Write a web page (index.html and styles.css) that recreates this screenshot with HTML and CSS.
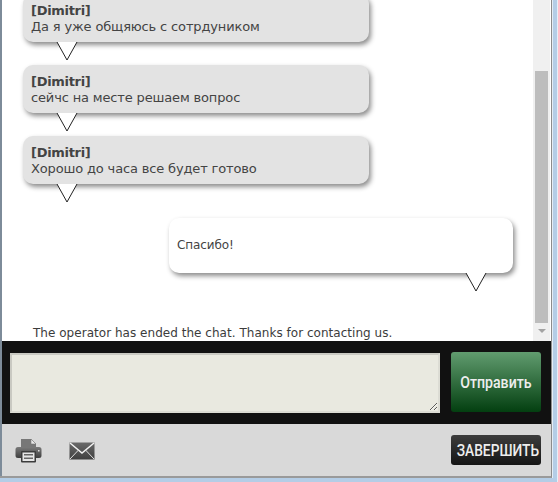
FILE: index.html
```html
<!DOCTYPE html>
<html>
    <head>
        <title>Chat</title>
        <link rel="stylesheet" href="styles.css">
    </head>
    <body>
        <div class="window">
            <div class="chat-area">
                <div class="messages">
                    <div class="bubble bubble-agent">
                        <b>[Dimitri]</b><br>Да я уже общяюсь с сотрдуником
                        <svg class="tail" width="22" height="19" viewBox="0 0 22 19"><polygon points="1,0 11,18 21,0" fill="#fff"/><polyline points="1,0 11,18 21,0" fill="none" stroke="#222" stroke-width="1"/></svg>
                    </div>
                    <div class="bubble bubble-agent">
                        <b>[Dimitri]</b><br>сейчс на месте решаем вопрос
                        <svg class="tail" width="22" height="19" viewBox="0 0 22 19"><polygon points="1,0 11,18 21,0" fill="#fff"/><polyline points="1,0 11,18 21,0" fill="none" stroke="#222" stroke-width="1"/></svg>
                    </div>
                    <div class="bubble bubble-agent">
                        <b>[Dimitri]</b><br>Хорошо до часа все будет готово
                        <svg class="tail" width="22" height="19" viewBox="0 0 22 19"><polygon points="1,0 11,18 21,0" fill="#fff"/><polyline points="1,0 11,18 21,0" fill="none" stroke="#222" stroke-width="1"/></svg>
                    </div>
                    <div class="bubble bubble-user">
                        Спасибо!
                        <svg class="tail" width="22" height="19" viewBox="0 0 22 19"><polygon points="1,0 11,18 21,0" fill="#fff"/><polyline points="1,0 11,18 21,0" fill="none" stroke="#222" stroke-width="1"/></svg>
                    </div>
                    <p class="status">The operator has ended the chat. Thanks for contacting us.</p>
                </div>
                <div class="scrollbar">
                    <div class="scroll-thumb"></div>
                    <div class="scroll-arrow"></div>
                </div>
            </div>
            <div class="input-bar">
                <textarea class="message-input"></textarea>
                <button class="send-button"><span>Отправить</span></button>
            </div>
            <div class="footer">
                <div class="footer-icons">
                    <svg class="icon-print" width="27" height="25" viewBox="0 0 27 25">
                        <defs>
                            <linearGradient id="print-body" x1="0" y1="0" x2="0" y2="1">
                                <stop offset="0" stop-color="#7a7a7a"/>
                                <stop offset="1" stop-color="#3f3f3f"/>
                            </linearGradient>
                        </defs>
                        <path d="M6 1h10l5 5v5H6z" fill="#777"/>
                        <path d="M16 1v5h5z" fill="#e8e8e8" stroke="#777" stroke-width="0.6"/>
                        <path d="M3 9h21a2.500 2.500 0 0 1 2.500 2.500v6a2.500 2.500 0 0 1-2.500 2.500H3a2.500 2.500 0 0 1-2.500-2.500v-6A2.500 2.500 0 0 1 3 9z" fill="url(#print-body)"/>
                        <rect x="6" y="13" width="15" height="11.500" rx="1" fill="#3c3c3c"/>
                        <rect x="7.500" y="14.500" width="12" height="8.500" fill="#e6e6e6"/>
                        <rect x="9" y="16" width="9" height="1.500" fill="#666"/>
                        <rect x="9" y="19.500" width="9" height="1.500" fill="#666"/>
                        <rect x="23" y="12" width="1.500" height="1.500" fill="#ddd"/>
                    </svg>
                    <svg class="icon-mail" width="26" height="18" viewBox="0 0 26 18">
                        <defs>
                            <linearGradient id="mail-body" x1="0" y1="0" x2="0" y2="1">
                                <stop offset="0" stop-color="#6a6a6a"/>
                                <stop offset="1" stop-color="#3f3f3f"/>
                            </linearGradient>
                        </defs>
                        <rect x="0.500" y="0.500" width="25" height="17" fill="url(#mail-body)"/>
                        <path d="M1 1l12 10L25 1" fill="none" stroke="#f2f2f2" stroke-width="1.500"/>
                        <path d="M1 17l8.500-9M25 17l-8.500-9" fill="none" stroke="#ddd" stroke-width="1"/>
                    </svg>
                </div>
                <button class="end-button"><span>ЗАВЕРШИТЬ</span></button>
            </div>
        </div>
    </body>
</html>
```

FILE: styles.css
```css
html, body {
    margin:0;
    padding:0;
    height:482px;
    overflow:hidden;
}

body {
    background:linear-gradient(to right, #b4cde6 557px, #e6eef7 557px);
    font-family:"DejaVu Sans", sans-serif;
    font-size:13px;
    color:#444;
}

.window {
    width:549px;
    height:476px;
    padding-left:2px;
    border-right:1px solid #8c8c8c;
    border-bottom:2px solid #9a9a9a;
    background:linear-gradient(#7d8b99, #7d8b99) no-repeat left top / 2px 100%;
    box-shadow:1px 0 0 #e4edf6;
    display:flex;
    flex-direction:column;
}

.chat-area {
    height:341px;
    background-color:#fff;
    display:flex;
    overflow:hidden;
    flex:none;
}

.messages {
    flex:1;
    padding:0 0 0 21px;
    margin-top:-6px;
}

.bubble {
    position:relative;
    width:330px;
    padding:9px 8px 7px 8px;
    border-radius:10px;
    line-height:16px;
    letter-spacing:-0.15px;
    box-shadow:2px 3px 5px rgba(0,0,0,0.45);
}

.bubble b {
    letter-spacing:-0.3px;
}

.bubble-agent {
    height:32px;
    background-color:#e3e3e3;
    margin-bottom:23px;
}

.bubble-agent .tail {
    position:absolute;
    left:33px;
    top:48px;
}

.bubble-user {
    width:328px;
    height:55px;
    padding:0 8px;
    margin:34px 0 0 146px;
    background-color:#fff;
    font-size:12px;
    letter-spacing:-0.1px;
    line-height:55px;
}

.bubble-user .tail {
    position:absolute;
    left:296px;
    top:55px;
}

.status {
    margin:52px 0 0 10px;
    font-size:12px;
    letter-spacing:0.03px;
    line-height:16px;
    color:#3c3c3c;
}

.scrollbar {
    width:17px;
    margin-right:1px;
    flex:none;
    background-color:#f0f0f0;
    display:flex;
    flex-direction:column;
    align-items:center;
}

.scroll-thumb {
    width:13px;
    height:252px;
    margin-top:71px;
    background-color:#bdbdbd;
}

.scroll-arrow {
    margin-top:6px;
    border-left:4px solid transparent;
    border-right:4px solid transparent;
    border-top:4px solid #a3a3a3;
}

.input-bar {
    height:83px;
    flex:none;
    background-color:#111;
    display:flex;
    align-items:flex-start;
    box-sizing:border-box;
    padding:11px 0 0 8px;
}

.message-input {
    width:430px;
    height:60px;
    margin:1px 11px 0 0;
    box-sizing:border-box;
    background-color:#e9e9e0;
    border:2px solid #c9c9c2;
    border-right-color:#dcdcd4;
    border-bottom-color:#dcdcd4;
    padding:2px;
}

.send-button, .end-button {
    border:none;
    padding:0;
    color:#eee;
    font-family:"Roboto", sans-serif;
    font-weight:500;
    font-size:17px;
    display:flex;
    align-items:center;
    justify-content:center;
    white-space:nowrap;
}

.send-button span, .end-button span {
    display:block;
    transform:scaleX(0.81);
}

.send-button {
    width:90px;
    height:60px;
    border-radius:3px;
    background:linear-gradient(#619c6f, #033f10);
}

.send-button span {
    transform:scaleX(0.83);
}

.footer {
    flex:1;
    background-color:#d9d9d9;
    display:flex;
    align-items:flex-start;
    justify-content:space-between;
    padding:0 10px 0 13px;
}

.footer-icons {
    display:flex;
    align-items:center;
    gap:27px;
    margin-top:14px;
}

.end-button {
    width:90px;
    height:30px;
    margin-top:11px;
    padding-left:3px;
    border-radius:3px;
    background:linear-gradient(#3d3d3d, #151515);
}
```
